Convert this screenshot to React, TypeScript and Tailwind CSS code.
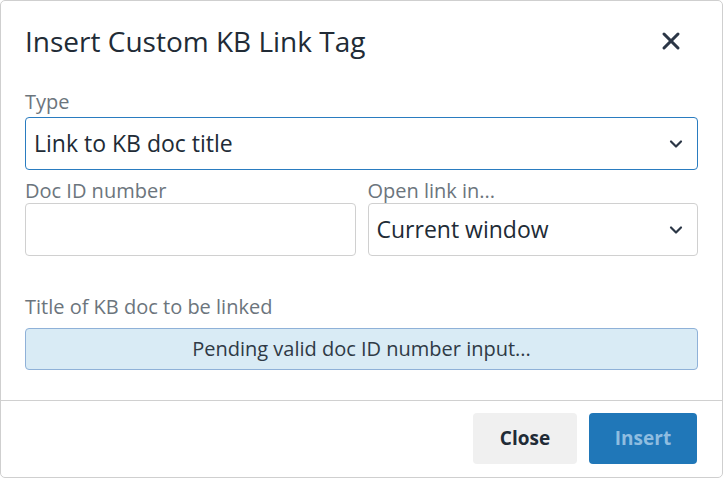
import { X, ChevronDown } from "lucide-react";

function Label({ children }: { children: React.ReactNode }) {
  return <div className="text-[20px] leading-[22px] text-[#6c757d]">{children}</div>;
}

function Select({ value, focused }: { value: string; focused?: boolean }) {
  return (
    <div
      className={
        focused
          ? "flex h-[53px] items-center justify-between rounded-[4px] border border-[#2a7cc0] pl-[8px] pr-[11px]"
          : "flex h-[53px] items-center justify-between rounded-[4px] border border-[#d0d0d0] pl-[8px] pr-[11px]"
      }
    >
      <span className="text-[23px] text-[#212b36]">{value}</span>
      <ChevronDown className="h-[20px] w-[20px] text-[#2b3646]" strokeWidth={2.6} />
    </div>
  );
}

export default function App() {
  return (
    <div className="h-[478px] w-[723px] bg-white font-['Open_Sans',sans-serif]">
      <div className="flex h-full flex-col rounded-[5px] border border-[#cfcfcf]">
        <div className="flex items-center justify-between pl-[24px] pr-[37px] pt-[20px]">
          <h1 className="text-[28px] leading-[40px] text-[#212b36]">Insert Custom KB Link Tag</h1>
          <X className="h-[28px] w-[28px] text-[#2b3646]" strokeWidth={2.6} />
        </div>

        <div className="flex flex-col px-[24px] pt-[30px]">
          <Label>Type</Label>
          <div className="mt-[4px]">
            <Select value="Link to KB doc title" focused />
          </div>

          <div className="mt-[10px] grid grid-cols-2 gap-[12px]">
            <div>
              <Label>Doc ID number</Label>
              <div className="mt-[1px] h-[53px] rounded-[4px] border border-[#d0d0d0]" />
            </div>
            <div>
              <Label>Open link in...</Label>
              <div className="mt-[1px]">
                <Select value="Current window" />
              </div>
            </div>
          </div>

          <div className="mt-[40px]">
            <Label>Title of KB doc to be linked</Label>
            <div className="mt-[10px] flex h-[42px] items-center justify-center rounded-[4px] border border-[#8fb1d8] bg-[#d9ebf5] text-[20px] text-[#2f3a46]">
              Pending valid doc ID number input...
            </div>
          </div>
        </div>

        <div className="mt-auto flex justify-end gap-[12px] border-t border-[#d0d0d0] px-[25px] pb-[13px] pt-[12px]">
          <button className="h-[51px] w-[104px] rounded-[4px] bg-[#f0f0f0] text-[19px] font-bold text-[#212b36]">
            Close
          </button>
          <button className="h-[51px] w-[108px] rounded-[4px] bg-[#2077b8] text-[19px] font-bold text-[#8fbde0]">
            Insert
          </button>
        </div>
      </div>
    </div>
  );
}
